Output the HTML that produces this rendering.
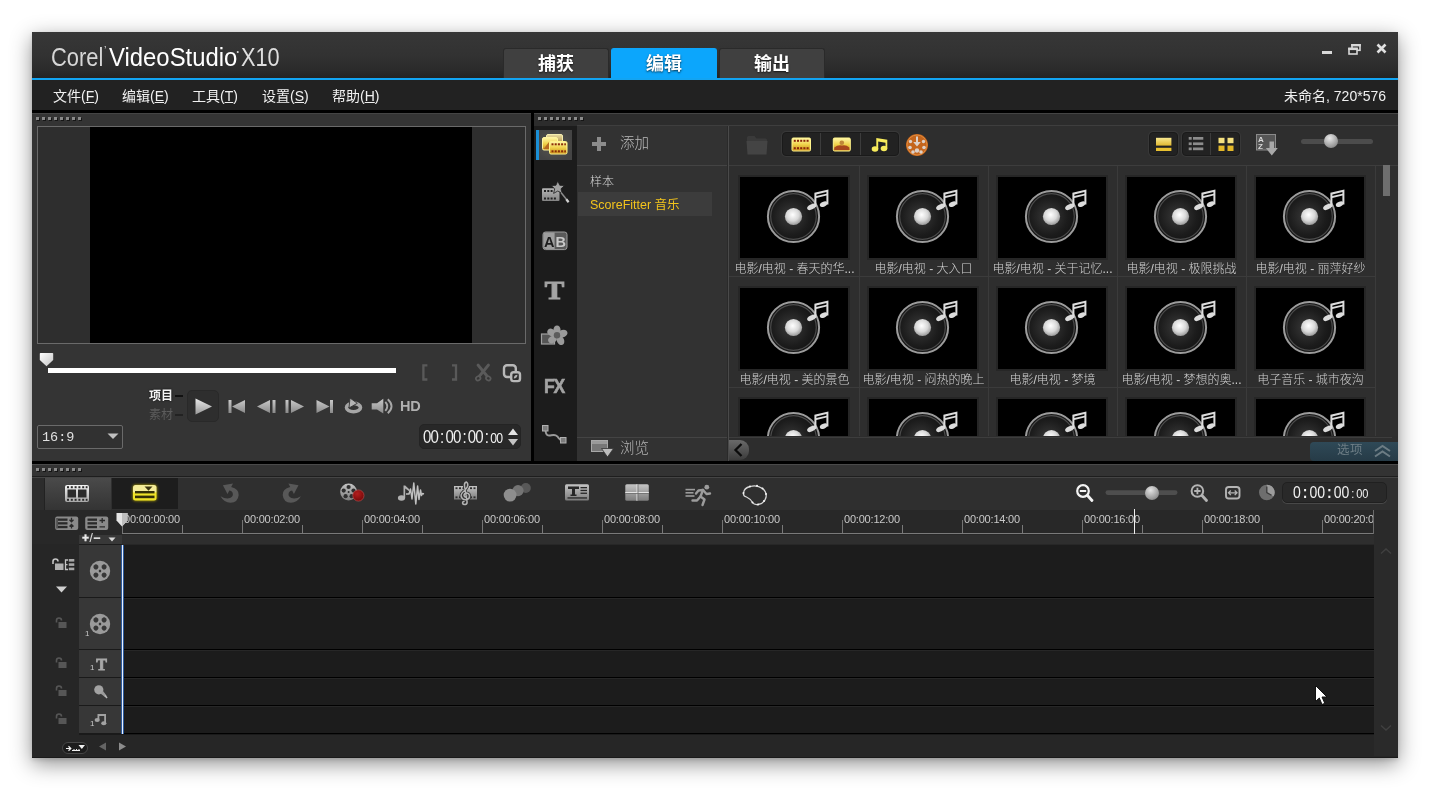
<!DOCTYPE html>
<html lang="zh-CN">
<head>
<meta charset="utf-8">
<title>Corel VideoStudio X10</title>
<style>
html,body{margin:0;padding:0;background:#fff;}
body{width:1430px;height:790px;position:relative;overflow:hidden;will-change:transform;font-family:"Liberation Sans","Noto Sans CJK SC",sans-serif;font-size:12px;color:#ddd;}
.a{position:absolute;box-sizing:border-box;}
#win{left:32px;top:32px;width:1366px;height:725.500px;background:#2b2b2b;box-shadow:0 6px 20px 0 rgba(0,0,0,.43),0 2px 4px rgba(0,0,0,.12);}
#title{left:32px;top:32px;width:1366px;height:46px;background:linear-gradient(#373737,#323232 50%,#2b2b2b 82%,#232323);}
#blue{left:32px;top:78px;width:1366px;height:2.300px;background:#12a4f2;}
#menu{left:32px;top:80px;width:1366px;height:30px;background:#222;}
#blk1{left:32px;top:110px;width:1366px;height:3px;background:#000;}
.tab{top:48px;width:106px;height:30px;background:#404040;color:#fff;font-weight:bold;font-size:18px;line-height:30px;text-align:center;text-shadow:0 1px 2px rgba(0,0,0,.7);border-radius:3px 3px 0 0;border:1px solid #2a2a2a;border-bottom:none;}
.tab.on{background:#0ca6fc;border-color:#0ca6fc;}
.lg{top:41px;height:32px;line-height:32px;font-size:25px;white-space:nowrap;transform-origin:0 50%;}
.mi{top:80px;height:30px;line-height:33px;font-size:14px;color:#f0f0f0;white-space:nowrap;}
.mi u{text-decoration:underline;}
.grip{height:4px;width:46px;background:repeating-linear-gradient(90deg,#8a8a8a 0,#8a8a8a 3px,transparent 3px,transparent 6px) 0 0/45px 3px no-repeat,repeating-linear-gradient(90deg,#161616 0,#161616 3px,transparent 3px,transparent 6px) 1px 1px/45px 3px no-repeat;}
/* preview */
#pv{left:32px;top:113px;width:499px;height:348px;background:#343434;border-top:1px solid #444;}
#pvframe{left:37px;top:126px;width:489px;height:218px;background:#2e2e2e;border:1px solid #6a6a6a;}
#pvblack{left:90px;top:127px;width:382px;height:216px;background:#000;}
#vdiv{left:531px;top:113px;width:3px;height:348px;background:#000;}
/* library */
#lib{left:534px;top:113px;width:864px;height:348px;background:#2c2c2c;border-top:1px solid #444;}
#side{left:534px;top:126px;width:43px;height:335px;background:#1c1c1c;}
#nav{left:577px;top:126px;width:151px;height:335px;background:#323232;}
#gal{left:729px;top:126px;width:669px;height:335px;background:#2e2e2e;}
#blk2{left:32px;top:460.500px;width:1366px;height:3.500px;background:#000;}
/* timeline */
#tl{left:32px;top:464px;width:1366px;height:293.500px;background:#262626;border-top:1px solid #4a4a4a;border-bottom:1.500px solid #1a1a1a;}
#tbar{left:32px;top:478px;width:1366px;height:32px;background:#2f2f2f;}
.trk{left:122px;width:1252px;background:#1c1c1c;border-bottom:1px solid #000;border-top:1px solid #272727;}
.th{left:79px;width:43px;background:#373737;border-bottom:1px solid #1a1a1a;}
.cap{width:129px;height:16px;line-height:16px;text-align:center;font-size:12px;font-weight:300;color:#d0d0d0;margin-top:1px;white-space:nowrap;overflow:hidden;}
.thumb{width:108px;height:81px;background:#000;}
.tc{color:#f2f2f2;white-space:nowrap;transform-origin:0 50%;}
.tc .col{display:inline-block;text-align:center;}
.rl{top:513px;font-size:11px;color:#c8c8c8;white-space:nowrap;letter-spacing:-0.2px;}
</style>
</head>
<body>
<div class="a" id="win"></div>
<div class="a" id="title"></div>
<div class="a" id="blue"></div>
<div class="a" id="menu"></div>
<div class="a" id="blk1"></div>

<!-- title -->
<div class="a lg" id="lg1" style="left:51px;transform:scaleX(.875);color:#d6d6d6;">Corel</div>
<div class="a" style="left:104px;top:45px;font-size:11px;line-height:11px;color:#d8d8d8;">&#8217;</div>
<div class="a lg" id="lg2" style="left:109px;transform:scaleX(.955);color:#fff;">VideoStudio</div>
<div class="a" style="left:236.500px;top:48px;font-size:7px;line-height:8px;color:#d8d8d8;">&#8226;</div>
<div class="a lg" id="lg3" style="left:240.500px;transform:scaleX(.87);color:#dedede;">X10</div>
<div class="a tab" style="left:503px;">捕获</div>
<div class="a tab on" style="left:611px;">编辑</div>
<div class="a tab" style="left:719px;">输出</div>
<svg class="a" style="left:1318px;top:41px;" width="72" height="18" viewBox="0 0 72 18">
 <rect x="4" y="10" width="10" height="3" fill="#d8d8d8"/>
 <g fill="none" stroke="#d8d8d8" stroke-width="1.6"><rect x="34" y="3.8" width="8" height="5.5"/><rect x="31" y="7.5" width="8" height="5.5" fill="#2d2d2d"/></g>
 <rect x="33.2" y="3" width="9.6" height="2.4" fill="#d8d8d8"/><rect x="30.2" y="6.7" width="9.6" height="2.4" fill="#d8d8d8"/>
 <path d="M59.5 3.5 L67.5 11.5 M67.5 3.5 L59.5 11.5" stroke="#e0e0e0" stroke-width="2.6"/>
</svg>
<!-- menu -->
<div class="a mi" style="left:53px;">文件(<u>F</u>)</div>
<div class="a mi" style="left:122px;">编辑(<u>E</u>)</div>
<div class="a mi" style="left:192px;">工具(<u>T</u>)</div>
<div class="a mi" style="left:262px;">设置(<u>S</u>)</div>
<div class="a mi" style="left:332px;">帮助(<u>H</u>)</div>
<div class="a mi" style="right:44px;">未命名, 720*576</div>
<div class="a" id="pv"></div>

<!-- preview -->
<div class="a grip" style="left:36px;top:117px;"></div>
<div class="a" id="pvframe"></div>
<div class="a" id="pvblack"></div>
<svg class="a" style="left:39px;top:352px;" width="16" height="16" viewBox="0 0 16 16"><defs><linearGradient id="gth" x1="0" y1="0" x2="1" y2="1"><stop offset="0" stop-color="#fff"/><stop offset="1" stop-color="#c4c4c4"/></linearGradient></defs><path d="M1.5 1 H13.5 Q14.2 1 14.2 1.8 V8 L7.5 14.2 L0.8 8 V1.8 Q0.8 1 1.5 1Z" fill="url(#gth)"/></svg>
<div class="a" style="left:48px;top:368px;width:348px;height:5px;background:#fff;"></div>
<svg class="a" style="left:418px;top:360px;" width="108" height="26" viewBox="0 0 108 26">
 <g fill="none" stroke="#595959" stroke-width="2.300"><path d="M9.400 5.400 H5.400 V19.500 H9.400"/><path d="M34 5.400 H38 V19.500 H34"/></g>
 <g fill="none" stroke="#5a5a5a" stroke-linecap="round"><path d="M60 5 L69 16" stroke-width="2.800"/><path d="M70.500 5 L61.500 16" stroke-width="2.800"/><ellipse cx="60.200" cy="18.300" rx="2.400" ry="2" stroke-width="1.700" transform="rotate(-35 60.200 18.300)"/><ellipse cx="70.300" cy="18.300" rx="2.400" ry="2" stroke-width="1.700" transform="rotate(35 70.300 18.300)"/></g>
 <g fill="none" stroke="#b8b8b8" stroke-width="2.400"><rect x="86" y="5.200" width="11.800" height="11.800" rx="3"/><rect x="93.200" y="12.300" width="8.800" height="8.800" rx="2.400" fill="#2a2a2a"/></g>
 <path d="M95.800 18.600 Q95.800 15 99.500 14.800 Q99.300 18.600 95.800 18.600Z" fill="#b0b0b0"/>
</svg>
<div class="a" style="left:149px;top:389px;font-size:12px;line-height:14px;font-weight:bold;color:#f4f4f4;text-shadow:0 0 2px #000;">项目</div>
<div class="a" style="left:149px;top:408px;font-size:12px;line-height:14px;color:#5c5c5c;">素材</div>
<div class="a" style="left:175px;top:395px;width:8px;height:2px;background:#111;"></div>
<div class="a" style="left:175px;top:414px;width:8px;height:2px;background:#222;"></div>
<div class="a" style="left:187px;top:390px;width:32px;height:32px;border-radius:5px;background:#2e2e2e;border:1px solid #292929;"></div>
<svg class="a" style="left:187px;top:390px;" width="240" height="32" viewBox="0 0 240 32">
 <defs><linearGradient id="gp" x1="0" y1="0" x2="0" y2="1"><stop offset="0" stop-color="#e8e8e8"/><stop offset="1" stop-color="#9a9a9a"/></linearGradient>
 <linearGradient id="gq" x1="0" y1="0" x2="0" y2="1"><stop offset="0" stop-color="#c8c8c8"/><stop offset="1" stop-color="#8a8a8a"/></linearGradient></defs>
 <path d="M8.5 8.5 L25 16.5 L8.5 24.5Z" fill="url(#gp)"/>
 <g fill="url(#gq)">
  <rect x="41.500" y="10" width="3" height="13"/><path d="M58 10 V23 L45 16.5Z"/>
  <path d="M83 10 V23 L70 16.5Z"/><rect x="85.500" y="10" width="3" height="13"/>
  <rect x="98.500" y="10" width="3" height="13"/><path d="M104 10 V23 L117 16.5Z"/>
  <path d="M129.500 10 V23 L142.500 16.500Z"/><rect x="143" y="10" width="3" height="13"/>
  <path d="M184.700 13.300 H190 L196.300 8.800 V23.400 L190 19.600 H184.700Z"/>
 </g>
 <ellipse cx="166.500" cy="17.600" rx="7" ry="4.200" fill="none" stroke="#a6a6a6" stroke-width="3.600"/>
 <path d="M163 8 L170.300 13.300 L165.500 16 L162 18Z" fill="#b4b4b4" stroke="#343434" stroke-width=".9"/>
 <g fill="none" stroke="#a8a8a8" stroke-width="1.900"><path d="M198.300 11.800 Q202.300 16.300 198.300 20.800"/><path d="M200.800 9.300 Q208.300 16.300 200.800 23.300"/></g>
</svg>
<div class="a" style="left:400px;top:398px;font-size:14.500px;line-height:17px;font-weight:bold;color:#b0b0b0;letter-spacing:-.3px;">HD</div>
<div class="a" style="left:37px;top:424.500px;width:86px;height:24px;border:1px solid #6a6a6a;border-radius:2px;background:#313131;"></div>
<div class="a" style="left:42px;top:429px;font-family:'Liberation Mono',monospace;font-size:13.500px;line-height:17px;color:#e0e0e0;">16:9</div>
<svg class="a" style="left:106px;top:432px;" width="14" height="8" viewBox="0 0 14 8"><path d="M1.500 1.500 H12.500 L7 7Z" fill="#c0c0c0"/></svg>
<div class="a" style="left:419px;top:424px;width:102px;height:25px;border-radius:5px;background:#282828;border:1px solid #242424;"></div>
<div class="a tc" id="tc1" style="left:422.500px;top:426.500px;font-size:19px;line-height:20px;letter-spacing:-1px;transform:scaleX(.79);">00<span class="col" style="width:9.200px">:</span>00<span class="col" style="width:9.200px">:</span>00<span class="col" style="width:9.200px">:</span><span style="font-size:15.500px">00</span></div>
<svg class="a" style="left:506px;top:427px;" width="14" height="20" viewBox="0 0 14 20"><path d="M7 1.500 L12 8 H2Z" fill="#e4e4e4"/><path d="M7 18.500 L12 12 H2Z" fill="#c4c4c4"/></svg>
<div class="a" id="vdiv"></div>
<div class="a" id="lib"></div>

<!-- library -->
<div class="a grip" style="left:538px;top:117px;"></div>
<div class="a" id="side"></div>
<div class="a" id="nav"></div>
<div class="a" id="gal"></div>
<div class="a" style="left:577px;top:125px;width:821px;height:1px;background:#3e3e3e;"></div>
<div class="a" style="left:727px;top:126px;width:1px;height:335px;background:#2a2a2a;"></div><div class="a" style="left:728px;top:126px;width:1px;height:335px;background:#4a4a4a;"></div>
<!-- sidebar icons -->
<div class="a" style="left:536px;top:130px;width:36px;height:30px;background:radial-gradient(ellipse at 50% 50%,#5a5852,#444 75%);"></div>
<div class="a" style="left:536px;top:130px;width:3px;height:30px;background:#1b8fd6;"></div>
<svg class="a" style="left:540px;top:130px;" width="32" height="30" viewBox="0 0 32 30">
 <defs>
  <linearGradient id="gy" x1="0" y1="0" x2="0" y2="1"><stop offset="0" stop-color="#fff6a8"/><stop offset=".5" stop-color="#f0d24a"/><stop offset="1" stop-color="#c88a18"/></linearGradient>
  <linearGradient id="gy2" x1="0" y1="0" x2="0" y2="1"><stop offset="0" stop-color="#e8dca0"/><stop offset="1" stop-color="#a07830"/></linearGradient>
 </defs>
 <rect x="6.500" y="4.500" width="16" height="12" rx="1.500" fill="url(#gy2)" stroke="#f4ecb0" stroke-width="1"/>
 <rect x="2.500" y="7.500" width="15" height="12.500" rx="1.500" fill="url(#gy)" stroke="#fff4a0" stroke-width="1"/>
 <path d="M3.500 19 L9 12 L12 15 L14 13 L17 16 V19.500Z" fill="#b86a20"/>
 <rect x="9.500" y="11.500" width="17.500" height="12.500" rx="1.500" fill="url(#gy)" stroke="#fff48c" stroke-width="1"/>
 <g fill="#8a2c08"><rect x="11.500" y="13.300" width="2" height="2"/><rect x="14.700" y="13.300" width="2" height="2"/><rect x="17.900" y="13.300" width="2" height="2"/><rect x="21.100" y="13.300" width="2" height="2"/><rect x="24.300" y="13.300" width="1.600" height="2"/>
 <rect x="11.500" y="20.300" width="2" height="2"/><rect x="14.700" y="20.300" width="2" height="2"/><rect x="17.900" y="20.300" width="2" height="2"/><rect x="21.100" y="20.300" width="2" height="2"/><rect x="24.300" y="20.300" width="1.600" height="2"/></g>
</svg>
<svg class="a" style="left:538px;top:178px;" width="36" height="28" viewBox="0 0 36 28">
 <defs><linearGradient id="gg" x1="0" y1="0" x2="0" y2="1"><stop offset="0" stop-color="#b4b4b4"/><stop offset="1" stop-color="#858585"/></linearGradient></defs>
 <rect x="4" y="10.300" width="17.500" height="12.700" rx="1" fill="url(#gg)"/>
 <g fill="#222"><rect x="6" y="12" width="2" height="2"/><rect x="9.300" y="12" width="2" height="2"/><rect x="12.600" y="12" width="2" height="2"/>
 <rect x="6" y="19.500" width="2" height="2"/><rect x="9.300" y="19.500" width="2" height="2"/><rect x="12.600" y="19.500" width="2" height="2"/><rect x="15.900" y="19.500" width="2" height="2"/></g>
 <path d="M19.800 3 L21.800 7.300 L26.500 7.600 L23 10.800 L24.200 15.400 L19.800 13 L15.600 15.400 L16.700 10.800 L13.200 7.600 L17.900 7.300Z" fill="#a2a2a2" stroke="#1c1c1c" stroke-width=".8"/>
 <path d="M23 14.500 L30.300 23.800" stroke="#8a8a8a" stroke-width="1.500"/><path d="M28.300 21.300 L30.600 24.200" stroke="#d0d0d0" stroke-width="2.200"/>
</svg>
<svg class="a" style="left:540px;top:229px;" width="32" height="24" viewBox="0 0 32 24">
 <rect x="3" y="3" width="24" height="17.600" rx="2.500" fill="#5a5a5a" stroke="#9c9c9c" stroke-width="1"/>
 <path d="M5.500 3.500 H14.600 V20.100 H5.500 Q3.500 20.100 3.500 18.100 V5.500 Q3.500 3.500 5.500 3.500Z" fill="#9e9e9e"/>
 <text x="9.300" y="17.600" font-family="Liberation Sans,sans-serif" font-size="14.500" font-weight="bold" fill="#1e1e1e" text-anchor="middle">A</text>
 <text x="20.800" y="17.600" font-family="Liberation Sans,sans-serif" font-size="14.500" font-weight="bold" fill="#c8c8c8" text-anchor="middle">B</text>
</svg>
<div class="a" style="left:540px;top:276px;width:29px;height:30px;line-height:30px;text-align:center;transform:scaleX(1.120);font-family:'Liberation Serif',serif;font-weight:bold;font-size:26px;color:#a4a4a4;-webkit-text-stroke:1.100px #a4a4a4;">T</div>
<svg class="a" style="left:538px;top:322px;" width="34" height="28" viewBox="0 0 34 28">
 <rect x="3.500" y="12" width="13" height="10" fill="#555" stroke="#a0a0a0" stroke-width="1.200"/>
 <g fill="#9a9a9a"><ellipse cx="19" cy="8" rx="3.600" ry="4.600"/><ellipse cx="25" cy="11.500" rx="4.600" ry="3.600" transform="rotate(-20 25 11.500)"/><ellipse cx="22.500" cy="18.500" rx="3.600" ry="4.800" transform="rotate(-25 22.500 18.500)"/><ellipse cx="14.500" cy="17.500" rx="4.600" ry="3.400" transform="rotate(-30 14.500 17.500)"/><ellipse cx="13.500" cy="10.500" rx="4.400" ry="3.400" transform="rotate(30 13.500 10.500)"/></g>
 <circle cx="19" cy="13.300" r="3.200" fill="#5c5c5c"/>
</svg>
<div class="a" style="left:539.500px;top:374px;width:28px;height:24px;line-height:24px;text-align:center;font-weight:bold;font-size:20px;letter-spacing:-1.500px;color:#a2a2a2;-webkit-text-stroke:.6px #a2a2a2;transform:scaleX(.88);">FX</div>
<svg class="a" style="left:538px;top:422px;" width="34" height="26" viewBox="0 0 34 26">
 <path d="M7.500 7 C7.500 18 14 11 18 13.500 C22 16 20 18 24.500 18" fill="none" stroke="#9a9a9a" stroke-width="2"/>
 <rect x="4.500" y="3.500" width="5.500" height="5.500" fill="#7c7c7c" stroke="#b0b0b0" stroke-width="1"/>
 <rect x="22.500" y="15.500" width="5.500" height="5.500" fill="#7c7c7c" stroke="#b0b0b0" stroke-width="1"/>
</svg>
<!-- nav -->
<svg class="a" style="left:591px;top:136px;" width="16" height="16" viewBox="0 0 16 16"><path d="M6 1 H10 V6 H15 V10 H10 V15 H6 V10 H1 V6 H6Z" fill="#8c8c8c"/></svg>
<div class="a" style="left:620px;top:133px;font-size:14.500px;line-height:20px;font-weight:300;color:#bcbcbc;">添加</div>
<div class="a" style="left:577px;top:165px;width:150px;height:1px;background:#444;"></div>
<div class="a" style="left:590px;top:174px;font-size:12px;line-height:16px;font-weight:300;color:#d4d4d4;">样本</div>
<div class="a" style="left:578px;top:192px;width:134px;height:24px;background:#3c3c3c;"></div>
<div class="a" style="left:590px;top:197px;font-size:12.500px;line-height:16px;color:#f3c41c;white-space:nowrap;">ScoreFitter 音乐</div>
<div class="a" style="left:577px;top:437px;width:150px;height:1px;background:#444;"></div>
<svg class="a" style="left:590px;top:439px;" width="26" height="20" viewBox="0 0 26 20"><rect x="1.500" y="1.500" width="16" height="11" fill="#777" stroke="#a8a8a8" stroke-width="1"/><rect x="2" y="2" width="15" height="3" fill="#9a9a9a"/><path d="M11.500 9.500 H23.500 L17.500 18Z" fill="#bdbdbd" stroke="#333" stroke-width=".8"/></svg>
<div class="a" style="left:620px;top:438px;font-size:14.500px;line-height:20px;font-weight:300;color:#b4b4b4;">浏览</div>

<!-- gallery toolbar -->
<svg class="a" style="left:744px;top:132px;" width="26" height="26" viewBox="0 0 26 26"><path d="M3 5.500 Q3 4 4.500 4 H10.500 L12.500 6.500 H21.500 Q23 6.500 23 8 V9.500 H3Z" fill="#3a3a3a"/><path d="M2.500 9 H23.500 L22.500 22.500 H3.500Z" fill="#444"/></svg>
<div class="a" style="left:782px;top:132px;width:117px;height:24px;border-radius:4px;background:#222;border:1px solid #1a1a1a;box-shadow:0 0 0 1px #383838;"></div>
<div class="a" style="left:820px;top:133px;width:1px;height:22px;background:#3c3c3c;"></div>
<div class="a" style="left:860px;top:133px;width:1px;height:22px;background:#3c3c3c;"></div>
<svg class="a" style="left:790px;top:136px;" width="100" height="18" viewBox="0 0 100 18">
 <rect x="2" y="2" width="18.500" height="13" rx="1.200" fill="url(#gy)" stroke="#fff48c" stroke-width="1"/>
 <g fill="#8a2408"><rect x="3.800" y="3.800" width="2" height="2"/><rect x="7" y="3.800" width="2" height="2"/><rect x="10.200" y="3.800" width="2" height="2"/><rect x="13.400" y="3.800" width="2" height="2"/><rect x="16.600" y="3.800" width="2" height="2"/>
 <rect x="3.800" y="11.200" width="2" height="2"/><rect x="7" y="11.200" width="2" height="2"/><rect x="10.200" y="11.200" width="2" height="2"/><rect x="13.400" y="11.200" width="2" height="2"/><rect x="16.600" y="11.200" width="2" height="2"/></g>
 <rect x="43.300" y="2" width="17" height="13" rx="1.200" fill="url(#gy)" stroke="#fff48c" stroke-width="1"/>
 <path d="M44.300 14 V11.500 Q48 8.500 52 9.500 Q56 8.500 59.300 11.500 V14Z" fill="#a8481c"/><circle cx="51.800" cy="6.800" r="2.300" fill="#c08838"/>
 <g fill="#f8ec5c"><ellipse cx="85" cy="13" rx="3.300" ry="2.700"/><ellipse cx="94" cy="12.500" rx="3.300" ry="2.700"/><path d="M86.300 2 L97.300 3.800 V12.500 H95.500 V6.800 L88.200 5.600 V13 H86.300Z"/></g>
</svg>
<svg class="a" style="left:905px;top:133px;" width="24" height="24" viewBox="0 0 24 24"><circle cx="12" cy="12" r="11" fill="#c4651c"/><circle cx="12" cy="12" r="10" fill="none" stroke="#e08a3c" stroke-width="1"/><g fill="#dcd0c8"><circle cx="5.500" cy="8.500" r="1.700"/><circle cx="18.500" cy="8.500" r="1.700"/><circle cx="5" cy="14.500" r="1.800"/><circle cx="19" cy="14.500" r="1.800"/><circle cx="8" cy="19" r="1.800"/><circle cx="16" cy="19" r="1.800"/><circle cx="12" cy="17.500" r="2.200"/><path d="M11 3.500 H13 V9 H15.800 L12 13.500 L8.200 9 H11Z"/></g></svg>
<div class="a" style="left:1149px;top:132px;width:29px;height:24px;border-radius:4px;background:#222;border:1px solid #1a1a1a;box-shadow:0 0 0 1px #383838;"></div>
<div class="a" style="left:1182px;top:132px;width:58px;height:24px;border-radius:4px;background:#222;border:1px solid #1a1a1a;box-shadow:0 0 0 1px #383838;"></div>
<div class="a" style="left:1210px;top:133px;width:1px;height:22px;background:#3c3c3c;"></div>
<svg class="a" style="left:1149px;top:132px;" width="92" height="24" viewBox="0 0 92 24">
 <defs><linearGradient id="gy3" x1="0" y1="0" x2="0" y2="1"><stop offset="0" stop-color="#f8e890"/><stop offset="1" stop-color="#e0b830"/></linearGradient></defs>
 <rect x="7" y="5.800" width="15.400" height="7.800" fill="url(#gy3)"/><rect x="7" y="15.800" width="15.400" height="3.200" fill="#e8c030"/>
 <g fill="#8c8c8c"><rect x="39.700" y="5" width="3" height="2.700"/><rect x="44" y="5" width="10.300" height="2.700"/><rect x="39.700" y="10.400" width="3" height="2.700"/><rect x="44" y="10.400" width="10.300" height="2.700"/><rect x="39.700" y="15.500" width="3" height="2.700"/><rect x="44" y="15.500" width="10.300" height="2.700"/></g>
 <g><rect x="69.500" y="5.800" width="6" height="5.400" fill="#f4e080"/><rect x="78.500" y="5.800" width="6" height="5.400" fill="#f4e080"/><rect x="69.500" y="13.600" width="6" height="5.400" fill="#e4b828"/><rect x="78.500" y="13.600" width="6" height="5.400" fill="#e4b828"/></g>
</svg>
<svg class="a" style="left:1255px;top:132px;" width="26" height="26" viewBox="0 0 26 26"><rect x="1.500" y="2.500" width="19" height="15.500" fill="#555" stroke="#8a8a8a" stroke-width="1"/><path d="M14.500 9.500 H19 V16 H22.800 L16.800 23.500 L10.800 16 H14.500Z" fill="#a8a8a8"/><text x="3" y="9.800" font-family="Liberation Sans,sans-serif" font-weight="bold" font-size="8" fill="#d8d8d8">A</text><text x="3" y="16.800" font-family="Liberation Sans,sans-serif" font-weight="bold" font-size="8" fill="#d8d8d8">Z</text></svg>
<div class="a" style="left:1301px;top:139px;width:72px;height:5px;border-radius:3px;background:#4c4c4c;"></div>
<div class="a" style="left:1324px;top:134px;width:14px;height:14px;border-radius:7px;background:radial-gradient(circle at 40% 30%,#e8e8e8,#a0a0a0 60%,#6c6c6c);"></div>

<!-- gallery -->
<svg class="a" width="0" height="0" style="left:0;top:0"><defs><radialGradient id="gdisc" cx=".45" cy=".5" r=".6"><stop offset="0" stop-color="#3a3a3a"/><stop offset=".6" stop-color="#1c1c1c"/><stop offset="1" stop-color="#101010"/></radialGradient><radialGradient id="gball" cx=".45" cy=".4" r=".65"><stop offset="0" stop-color="#ffffff"/><stop offset=".55" stop-color="#d8d8d8"/><stop offset="1" stop-color="#8c8c8c"/></radialGradient></defs></svg>
<div class="a" style="left:859px;top:165px;width:1px;height:271px;background:#3b3b3b;"></div>
<div class="a" style="left:988px;top:165px;width:1px;height:271px;background:#3b3b3b;"></div>
<div class="a" style="left:1117px;top:165px;width:1px;height:271px;background:#3b3b3b;"></div>
<div class="a" style="left:1246px;top:165px;width:1px;height:271px;background:#3b3b3b;"></div>
<div class="a" style="left:1375px;top:165px;width:1px;height:271px;background:#3b3b3b;"></div>

<div class="a" style="left:729px;top:276px;width:646px;height:1px;background:#3b3b3b;"></div>
<div class="a" style="left:729px;top:387px;width:646px;height:1px;background:#3b3b3b;"></div>
<div class="a" style="left:729px;top:165px;width:669px;height:1px;background:#3d3d3d;"></div>
<div class="a" style="left:738px;top:175px;width:112px;height:85px;background:#262626;"></div>
<svg class="a" style="left:740px;top:177px;" width="108" height="81" viewBox="0 0 108 81"><rect width="108" height="81" fill="#000"/><circle cx="53.500" cy="39.500" r="25.600" fill="url(#gdisc)" stroke="#9c9c9c" stroke-width="2"/><circle cx="53.500" cy="39.500" r="22.800" fill="none" stroke="#4c4c4c" stroke-width="1.200"/><circle cx="53.500" cy="39.500" r="8.600" fill="url(#gball)"/><g fill="#dcdcdc" stroke="none"><ellipse cx="71.800" cy="29.800" rx="5" ry="2.500" transform="rotate(-26 71.800 29.800)"/><ellipse cx="83.600" cy="27.200" rx="4" ry="2.400" transform="rotate(-24 83.600 27.200)"/><path fill-rule="evenodd" d="M74.400 15.800 L88.400 12.600 V27.500 H86.400 V18.600 L76.400 20.900 V29.500 H74.400Z M76.400 17.400 V19 L86.400 16.700 V15.100Z"/></g></svg>
<div class="a cap" style="left:730px;top:260px;">电影/电视 - 春天的华...</div>
<div class="a" style="left:867px;top:175px;width:112px;height:85px;background:#262626;"></div>
<svg class="a" style="left:869px;top:177px;" width="108" height="81" viewBox="0 0 108 81"><rect width="108" height="81" fill="#000"/><circle cx="53.500" cy="39.500" r="25.600" fill="url(#gdisc)" stroke="#9c9c9c" stroke-width="2"/><circle cx="53.500" cy="39.500" r="22.800" fill="none" stroke="#4c4c4c" stroke-width="1.200"/><circle cx="53.500" cy="39.500" r="8.600" fill="url(#gball)"/><g fill="#dcdcdc" stroke="none"><ellipse cx="71.800" cy="29.800" rx="5" ry="2.500" transform="rotate(-26 71.800 29.800)"/><ellipse cx="83.600" cy="27.200" rx="4" ry="2.400" transform="rotate(-24 83.600 27.200)"/><path fill-rule="evenodd" d="M74.400 15.800 L88.400 12.600 V27.500 H86.400 V18.600 L76.400 20.900 V29.500 H74.400Z M76.400 17.400 V19 L86.400 16.700 V15.100Z"/></g></svg>
<div class="a cap" style="left:859px;top:260px;">电影/电视 - 大入口</div>
<div class="a" style="left:996px;top:175px;width:112px;height:85px;background:#262626;"></div>
<svg class="a" style="left:998px;top:177px;" width="108" height="81" viewBox="0 0 108 81"><rect width="108" height="81" fill="#000"/><circle cx="53.500" cy="39.500" r="25.600" fill="url(#gdisc)" stroke="#9c9c9c" stroke-width="2"/><circle cx="53.500" cy="39.500" r="22.800" fill="none" stroke="#4c4c4c" stroke-width="1.200"/><circle cx="53.500" cy="39.500" r="8.600" fill="url(#gball)"/><g fill="#dcdcdc" stroke="none"><ellipse cx="71.800" cy="29.800" rx="5" ry="2.500" transform="rotate(-26 71.800 29.800)"/><ellipse cx="83.600" cy="27.200" rx="4" ry="2.400" transform="rotate(-24 83.600 27.200)"/><path fill-rule="evenodd" d="M74.400 15.800 L88.400 12.600 V27.500 H86.400 V18.600 L76.400 20.900 V29.500 H74.400Z M76.400 17.400 V19 L86.400 16.700 V15.100Z"/></g></svg>
<div class="a cap" style="left:988px;top:260px;">电影/电视 - 关于记忆...</div>
<div class="a" style="left:1125px;top:175px;width:112px;height:85px;background:#262626;"></div>
<svg class="a" style="left:1127px;top:177px;" width="108" height="81" viewBox="0 0 108 81"><rect width="108" height="81" fill="#000"/><circle cx="53.500" cy="39.500" r="25.600" fill="url(#gdisc)" stroke="#9c9c9c" stroke-width="2"/><circle cx="53.500" cy="39.500" r="22.800" fill="none" stroke="#4c4c4c" stroke-width="1.200"/><circle cx="53.500" cy="39.500" r="8.600" fill="url(#gball)"/><g fill="#dcdcdc" stroke="none"><ellipse cx="71.800" cy="29.800" rx="5" ry="2.500" transform="rotate(-26 71.800 29.800)"/><ellipse cx="83.600" cy="27.200" rx="4" ry="2.400" transform="rotate(-24 83.600 27.200)"/><path fill-rule="evenodd" d="M74.400 15.800 L88.400 12.600 V27.500 H86.400 V18.600 L76.400 20.900 V29.500 H74.400Z M76.400 17.400 V19 L86.400 16.700 V15.100Z"/></g></svg>
<div class="a cap" style="left:1117px;top:260px;">电影/电视 - 极限挑战</div>
<div class="a" style="left:1254px;top:175px;width:112px;height:85px;background:#262626;"></div>
<svg class="a" style="left:1256px;top:177px;" width="108" height="81" viewBox="0 0 108 81"><rect width="108" height="81" fill="#000"/><circle cx="53.500" cy="39.500" r="25.600" fill="url(#gdisc)" stroke="#9c9c9c" stroke-width="2"/><circle cx="53.500" cy="39.500" r="22.800" fill="none" stroke="#4c4c4c" stroke-width="1.200"/><circle cx="53.500" cy="39.500" r="8.600" fill="url(#gball)"/><g fill="#dcdcdc" stroke="none"><ellipse cx="71.800" cy="29.800" rx="5" ry="2.500" transform="rotate(-26 71.800 29.800)"/><ellipse cx="83.600" cy="27.200" rx="4" ry="2.400" transform="rotate(-24 83.600 27.200)"/><path fill-rule="evenodd" d="M74.400 15.800 L88.400 12.600 V27.500 H86.400 V18.600 L76.400 20.900 V29.500 H74.400Z M76.400 17.400 V19 L86.400 16.700 V15.100Z"/></g></svg>
<div class="a cap" style="left:1246px;top:260px;">电影/电视 - 丽萍好纱</div>
<div class="a" style="left:738px;top:286px;width:112px;height:85px;background:#262626;"></div>
<svg class="a" style="left:740px;top:288px;" width="108" height="81" viewBox="0 0 108 81"><rect width="108" height="81" fill="#000"/><circle cx="53.500" cy="39.500" r="25.600" fill="url(#gdisc)" stroke="#9c9c9c" stroke-width="2"/><circle cx="53.500" cy="39.500" r="22.800" fill="none" stroke="#4c4c4c" stroke-width="1.200"/><circle cx="53.500" cy="39.500" r="8.600" fill="url(#gball)"/><g fill="#dcdcdc" stroke="none"><ellipse cx="71.800" cy="29.800" rx="5" ry="2.500" transform="rotate(-26 71.800 29.800)"/><ellipse cx="83.600" cy="27.200" rx="4" ry="2.400" transform="rotate(-24 83.600 27.200)"/><path fill-rule="evenodd" d="M74.400 15.800 L88.400 12.600 V27.500 H86.400 V18.600 L76.400 20.900 V29.500 H74.400Z M76.400 17.400 V19 L86.400 16.700 V15.100Z"/></g></svg>
<div class="a cap" style="left:730px;top:371px;">电影/电视 - 美的景色</div>
<div class="a" style="left:867px;top:286px;width:112px;height:85px;background:#262626;"></div>
<svg class="a" style="left:869px;top:288px;" width="108" height="81" viewBox="0 0 108 81"><rect width="108" height="81" fill="#000"/><circle cx="53.500" cy="39.500" r="25.600" fill="url(#gdisc)" stroke="#9c9c9c" stroke-width="2"/><circle cx="53.500" cy="39.500" r="22.800" fill="none" stroke="#4c4c4c" stroke-width="1.200"/><circle cx="53.500" cy="39.500" r="8.600" fill="url(#gball)"/><g fill="#dcdcdc" stroke="none"><ellipse cx="71.800" cy="29.800" rx="5" ry="2.500" transform="rotate(-26 71.800 29.800)"/><ellipse cx="83.600" cy="27.200" rx="4" ry="2.400" transform="rotate(-24 83.600 27.200)"/><path fill-rule="evenodd" d="M74.400 15.800 L88.400 12.600 V27.500 H86.400 V18.600 L76.400 20.900 V29.500 H74.400Z M76.400 17.400 V19 L86.400 16.700 V15.100Z"/></g></svg>
<div class="a cap" style="left:859px;top:371px;">电影/电视 - 闷热的晚上</div>
<div class="a" style="left:996px;top:286px;width:112px;height:85px;background:#262626;"></div>
<svg class="a" style="left:998px;top:288px;" width="108" height="81" viewBox="0 0 108 81"><rect width="108" height="81" fill="#000"/><circle cx="53.500" cy="39.500" r="25.600" fill="url(#gdisc)" stroke="#9c9c9c" stroke-width="2"/><circle cx="53.500" cy="39.500" r="22.800" fill="none" stroke="#4c4c4c" stroke-width="1.200"/><circle cx="53.500" cy="39.500" r="8.600" fill="url(#gball)"/><g fill="#dcdcdc" stroke="none"><ellipse cx="71.800" cy="29.800" rx="5" ry="2.500" transform="rotate(-26 71.800 29.800)"/><ellipse cx="83.600" cy="27.200" rx="4" ry="2.400" transform="rotate(-24 83.600 27.200)"/><path fill-rule="evenodd" d="M74.400 15.800 L88.400 12.600 V27.500 H86.400 V18.600 L76.400 20.900 V29.500 H74.400Z M76.400 17.400 V19 L86.400 16.700 V15.100Z"/></g></svg>
<div class="a cap" style="left:988px;top:371px;">电影/电视 - 梦境</div>
<div class="a" style="left:1125px;top:286px;width:112px;height:85px;background:#262626;"></div>
<svg class="a" style="left:1127px;top:288px;" width="108" height="81" viewBox="0 0 108 81"><rect width="108" height="81" fill="#000"/><circle cx="53.500" cy="39.500" r="25.600" fill="url(#gdisc)" stroke="#9c9c9c" stroke-width="2"/><circle cx="53.500" cy="39.500" r="22.800" fill="none" stroke="#4c4c4c" stroke-width="1.200"/><circle cx="53.500" cy="39.500" r="8.600" fill="url(#gball)"/><g fill="#dcdcdc" stroke="none"><ellipse cx="71.800" cy="29.800" rx="5" ry="2.500" transform="rotate(-26 71.800 29.800)"/><ellipse cx="83.600" cy="27.200" rx="4" ry="2.400" transform="rotate(-24 83.600 27.200)"/><path fill-rule="evenodd" d="M74.400 15.800 L88.400 12.600 V27.500 H86.400 V18.600 L76.400 20.900 V29.500 H74.400Z M76.400 17.400 V19 L86.400 16.700 V15.100Z"/></g></svg>
<div class="a cap" style="left:1117px;top:371px;">电影/电视 - 梦想的奥...</div>
<div class="a" style="left:1254px;top:286px;width:112px;height:85px;background:#262626;"></div>
<svg class="a" style="left:1256px;top:288px;" width="108" height="81" viewBox="0 0 108 81"><rect width="108" height="81" fill="#000"/><circle cx="53.500" cy="39.500" r="25.600" fill="url(#gdisc)" stroke="#9c9c9c" stroke-width="2"/><circle cx="53.500" cy="39.500" r="22.800" fill="none" stroke="#4c4c4c" stroke-width="1.200"/><circle cx="53.500" cy="39.500" r="8.600" fill="url(#gball)"/><g fill="#dcdcdc" stroke="none"><ellipse cx="71.800" cy="29.800" rx="5" ry="2.500" transform="rotate(-26 71.800 29.800)"/><ellipse cx="83.600" cy="27.200" rx="4" ry="2.400" transform="rotate(-24 83.600 27.200)"/><path fill-rule="evenodd" d="M74.400 15.800 L88.400 12.600 V27.500 H86.400 V18.600 L76.400 20.900 V29.500 H74.400Z M76.400 17.400 V19 L86.400 16.700 V15.100Z"/></g></svg>
<div class="a cap" style="left:1246px;top:371px;">电子音乐 - 城市夜沟</div>
<div class="a" style="left:738px;top:397px;width:112px;height:39px;background:#262626;"></div>
<svg class="a" style="left:740px;top:399px;" width="108" height="37" viewBox="0 0 108 37"><rect width="108" height="37" fill="#000"/><circle cx="53.500" cy="39.500" r="25.600" fill="url(#gdisc)" stroke="#9c9c9c" stroke-width="2"/><circle cx="53.500" cy="39.500" r="22.800" fill="none" stroke="#4c4c4c" stroke-width="1.200"/><circle cx="53.500" cy="39.500" r="8.600" fill="url(#gball)"/><g fill="#dcdcdc" stroke="none"><ellipse cx="71.800" cy="29.800" rx="5" ry="2.500" transform="rotate(-26 71.800 29.800)"/><ellipse cx="83.600" cy="27.200" rx="4" ry="2.400" transform="rotate(-24 83.600 27.200)"/><path fill-rule="evenodd" d="M74.400 15.800 L88.400 12.600 V27.500 H86.400 V18.600 L76.400 20.900 V29.500 H74.400Z M76.400 17.400 V19 L86.400 16.700 V15.100Z"/></g></svg>
<div class="a" style="left:867px;top:397px;width:112px;height:39px;background:#262626;"></div>
<svg class="a" style="left:869px;top:399px;" width="108" height="37" viewBox="0 0 108 37"><rect width="108" height="37" fill="#000"/><circle cx="53.500" cy="39.500" r="25.600" fill="url(#gdisc)" stroke="#9c9c9c" stroke-width="2"/><circle cx="53.500" cy="39.500" r="22.800" fill="none" stroke="#4c4c4c" stroke-width="1.200"/><circle cx="53.500" cy="39.500" r="8.600" fill="url(#gball)"/><g fill="#dcdcdc" stroke="none"><ellipse cx="71.800" cy="29.800" rx="5" ry="2.500" transform="rotate(-26 71.800 29.800)"/><ellipse cx="83.600" cy="27.200" rx="4" ry="2.400" transform="rotate(-24 83.600 27.200)"/><path fill-rule="evenodd" d="M74.400 15.800 L88.400 12.600 V27.500 H86.400 V18.600 L76.400 20.900 V29.500 H74.400Z M76.400 17.400 V19 L86.400 16.700 V15.100Z"/></g></svg>
<div class="a" style="left:996px;top:397px;width:112px;height:39px;background:#262626;"></div>
<svg class="a" style="left:998px;top:399px;" width="108" height="37" viewBox="0 0 108 37"><rect width="108" height="37" fill="#000"/><circle cx="53.500" cy="39.500" r="25.600" fill="url(#gdisc)" stroke="#9c9c9c" stroke-width="2"/><circle cx="53.500" cy="39.500" r="22.800" fill="none" stroke="#4c4c4c" stroke-width="1.200"/><circle cx="53.500" cy="39.500" r="8.600" fill="url(#gball)"/><g fill="#dcdcdc" stroke="none"><ellipse cx="71.800" cy="29.800" rx="5" ry="2.500" transform="rotate(-26 71.800 29.800)"/><ellipse cx="83.600" cy="27.200" rx="4" ry="2.400" transform="rotate(-24 83.600 27.200)"/><path fill-rule="evenodd" d="M74.400 15.800 L88.400 12.600 V27.500 H86.400 V18.600 L76.400 20.900 V29.500 H74.400Z M76.400 17.400 V19 L86.400 16.700 V15.100Z"/></g></svg>
<div class="a" style="left:1125px;top:397px;width:112px;height:39px;background:#262626;"></div>
<svg class="a" style="left:1127px;top:399px;" width="108" height="37" viewBox="0 0 108 37"><rect width="108" height="37" fill="#000"/><circle cx="53.500" cy="39.500" r="25.600" fill="url(#gdisc)" stroke="#9c9c9c" stroke-width="2"/><circle cx="53.500" cy="39.500" r="22.800" fill="none" stroke="#4c4c4c" stroke-width="1.200"/><circle cx="53.500" cy="39.500" r="8.600" fill="url(#gball)"/><g fill="#dcdcdc" stroke="none"><ellipse cx="71.800" cy="29.800" rx="5" ry="2.500" transform="rotate(-26 71.800 29.800)"/><ellipse cx="83.600" cy="27.200" rx="4" ry="2.400" transform="rotate(-24 83.600 27.200)"/><path fill-rule="evenodd" d="M74.400 15.800 L88.400 12.600 V27.500 H86.400 V18.600 L76.400 20.900 V29.500 H74.400Z M76.400 17.400 V19 L86.400 16.700 V15.100Z"/></g></svg>
<div class="a" style="left:1254px;top:397px;width:112px;height:39px;background:#262626;"></div>
<svg class="a" style="left:1256px;top:399px;" width="108" height="37" viewBox="0 0 108 37"><rect width="108" height="37" fill="#000"/><circle cx="53.500" cy="39.500" r="25.600" fill="url(#gdisc)" stroke="#9c9c9c" stroke-width="2"/><circle cx="53.500" cy="39.500" r="22.800" fill="none" stroke="#4c4c4c" stroke-width="1.200"/><circle cx="53.500" cy="39.500" r="8.600" fill="url(#gball)"/><g fill="#dcdcdc" stroke="none"><ellipse cx="71.800" cy="29.800" rx="5" ry="2.500" transform="rotate(-26 71.800 29.800)"/><ellipse cx="83.600" cy="27.200" rx="4" ry="2.400" transform="rotate(-24 83.600 27.200)"/><path fill-rule="evenodd" d="M74.400 15.800 L88.400 12.600 V27.500 H86.400 V18.600 L76.400 20.900 V29.500 H74.400Z M76.400 17.400 V19 L86.400 16.700 V15.100Z"/></g></svg>
<div class="a" style="left:1383px;top:165px;width:7px;height:31px;background:#6e6e6e;"></div>
<div class="a" style="left:729px;top:436px;width:669px;height:25px;background:#2d2d2d;"></div><div class="a" style="left:729px;top:436.500px;width:663px;height:1px;background:#3d3d3d;"></div>
<div class="a" style="left:729px;top:440px;width:20px;height:20px;border-radius:0 9px 9px 0;background:linear-gradient(#6a6a6a,#3c3c3c);"></div>
<svg class="a" style="left:729px;top:440px;" width="20" height="20" viewBox="0 0 20 20"><path d="M12.500 4 L6.500 10 L12.500 16" fill="none" stroke="#0c0c0c" stroke-width="2.300"/></svg>
<div class="a" style="left:1309.500px;top:442px;width:88.500px;height:18.500px;background:linear-gradient(#2f4957,#263b47);border-radius:4px 0 0 4px;"></div>
<div class="a" style="left:1337px;top:441px;font-size:12.500px;line-height:18px;letter-spacing:.5px;color:#6c7c84;">选项</div>
<svg class="a" style="left:1372px;top:443px;" width="20" height="16" viewBox="0 0 20 16"><g fill="none" stroke="#6c7c84" stroke-width="2"><path d="M3 8 L10.500 3 L18 8"/><path d="M3 13.500 L10.500 8.500 L18 13.500"/></g></svg>
<div class="a" id="blk2"></div>
<div class="a" id="tl"></div>

<!-- timeline -->
<div class="a" style="left:32px;top:465px;width:1366px;height:11px;background:#333;"></div>
<div class="a" style="left:32px;top:476px;width:1366px;height:1px;background:#1e1e1e;"></div>
<div class="a" style="left:32px;top:477px;width:1366px;height:1px;background:#454545;"></div>
<div class="a grip" style="left:36px;top:468px;"></div>
<div class="a" id="tbar"></div>
<div class="a" style="left:32px;top:478px;width:12px;height:32px;background:#2c2c2c;"></div>
<div class="a" style="left:44px;top:478px;width:67px;height:32px;background:linear-gradient(#4a4a4a,#343434);border-left:1px solid #222;"></div>
<div class="a" style="left:112px;top:478px;width:66px;height:31px;background:#1d1d1d;"></div>
<div class="a" style="left:32px;top:510px;width:1366px;height:34px;background:#282828;"></div>
<div class="a" style="left:122px;top:533px;width:1252px;height:1px;background:#7a7a7a;"></div>
<div class="a" style="left:79px;top:535px;width:43px;height:9px;background:#383838;"></div>
<div class="a" style="left:122px;top:535px;width:1252px;height:9px;background:#2e2e2e;"></div>
<div class="a" style="left:1374px;top:510px;width:24px;height:246px;background:#2a2a2a;"></div>
<div class="a" style="left:122px;top:520px;width:1px;height:13px;background:#747474;"></div>
<div class="a rl" style="left:124px;width:60px;overflow:hidden;">00:00:00:00</div>
<div class="a" style="left:182px;top:525px;width:1px;height:8px;background:#7a7a7a;"></div>
<div class="a" style="left:242px;top:520px;width:1px;height:13px;background:#747474;"></div>
<div class="a rl" style="left:244px;width:60px;overflow:hidden;">00:00:02:00</div>
<div class="a" style="left:302px;top:525px;width:1px;height:8px;background:#7a7a7a;"></div>
<div class="a" style="left:362px;top:520px;width:1px;height:13px;background:#747474;"></div>
<div class="a rl" style="left:364px;width:60px;overflow:hidden;">00:00:04:00</div>
<div class="a" style="left:422px;top:525px;width:1px;height:8px;background:#7a7a7a;"></div>
<div class="a" style="left:482px;top:520px;width:1px;height:13px;background:#747474;"></div>
<div class="a rl" style="left:484px;width:60px;overflow:hidden;">00:00:06:00</div>
<div class="a" style="left:542px;top:525px;width:1px;height:8px;background:#7a7a7a;"></div>
<div class="a" style="left:602px;top:520px;width:1px;height:13px;background:#747474;"></div>
<div class="a rl" style="left:604px;width:60px;overflow:hidden;">00:00:08:00</div>
<div class="a" style="left:662px;top:525px;width:1px;height:8px;background:#7a7a7a;"></div>
<div class="a" style="left:722px;top:520px;width:1px;height:13px;background:#747474;"></div>
<div class="a rl" style="left:724px;width:60px;overflow:hidden;">00:00:10:00</div>
<div class="a" style="left:782px;top:525px;width:1px;height:8px;background:#7a7a7a;"></div>
<div class="a" style="left:842px;top:520px;width:1px;height:13px;background:#747474;"></div>
<div class="a rl" style="left:844px;width:60px;overflow:hidden;">00:00:12:00</div>
<div class="a" style="left:902px;top:525px;width:1px;height:8px;background:#7a7a7a;"></div>
<div class="a" style="left:962px;top:520px;width:1px;height:13px;background:#747474;"></div>
<div class="a rl" style="left:964px;width:60px;overflow:hidden;">00:00:14:00</div>
<div class="a" style="left:1022px;top:525px;width:1px;height:8px;background:#7a7a7a;"></div>
<div class="a" style="left:1082px;top:520px;width:1px;height:13px;background:#747474;"></div>
<div class="a rl" style="left:1084px;width:60px;overflow:hidden;">00:00:16:00</div>
<div class="a" style="left:1142px;top:525px;width:1px;height:8px;background:#7a7a7a;"></div>
<div class="a" style="left:1202px;top:520px;width:1px;height:13px;background:#747474;"></div>
<div class="a rl" style="left:1204px;width:60px;overflow:hidden;">00:00:18:00</div>
<div class="a" style="left:1262px;top:525px;width:1px;height:8px;background:#7a7a7a;"></div>
<div class="a" style="left:1322px;top:520px;width:1px;height:13px;background:#747474;"></div>
<div class="a rl" style="left:1324px;width:50px;overflow:hidden;">00:00:20:00</div>
<div class="a" style="left:1134px;top:509px;width:1px;height:25px;background:#f0f0f0;"></div>
<div class="a th" style="top:544px;height:54px;"></div>
<div class="a trk" style="top:544px;height:54px;"></div>
<div class="a th" style="top:598px;height:52px;"></div>
<div class="a trk" style="top:598px;height:52px;"></div>
<div class="a th" style="top:650px;height:28px;"></div>
<div class="a trk" style="top:650px;height:28px;"></div>
<div class="a th" style="top:678px;height:28px;"></div>
<div class="a trk" style="top:678px;height:28px;"></div>
<div class="a th" style="top:706px;height:28px;"></div>
<div class="a trk" style="top:706px;height:28px;"></div>
<div class="a" style="left:1373px;top:510px;width:1px;height:24px;background:#6a6a6a;"></div>
<div class="a" style="left:79px;top:544px;width:43px;height:1px;background:#1c1c1c;z-index:2;"></div>
<div class="a" style="left:79px;top:734px;width:1295px;height:1px;background:#1a1a1a;"></div>
<div class="a" style="left:121px;top:545px;width:3px;height:189px;background:#2d5a9c;"></div>
<div class="a" style="left:122px;top:545px;width:1px;height:189px;background:#e8f0ff;"></div>
<svg class="a" style="left:115px;top:512px;" width="14" height="16" viewBox="0 0 14 16"><path d="M1.500 1 H12.500 V8.500 L7 14.500 L1.500 8.500Z" fill="#e4e4e4"/><path d="M7 1 V14.500 L12.500 8.500 V1Z" fill="#bdbdbd"/></svg>
<svg class="a" style="left:54px;top:617px;" width="14" height="12" viewBox="0 0 14 12"><path d="M2.500 5.500 V3.500 Q2.500 1 5 1 Q7.500 1 7.500 3.500" fill="none" stroke="#565656" stroke-width="1.600"/><rect x="4.500" y="5" width="8" height="6" fill="#565656"/></svg>
<svg class="a" style="left:54px;top:657px;" width="14" height="12" viewBox="0 0 14 12"><path d="M2.500 5.500 V3.500 Q2.500 1 5 1 Q7.500 1 7.500 3.500" fill="none" stroke="#565656" stroke-width="1.600"/><rect x="4.500" y="5" width="8" height="6" fill="#565656"/></svg>
<svg class="a" style="left:54px;top:685px;" width="14" height="12" viewBox="0 0 14 12"><path d="M2.500 5.500 V3.500 Q2.500 1 5 1 Q7.500 1 7.500 3.500" fill="none" stroke="#565656" stroke-width="1.600"/><rect x="4.500" y="5" width="8" height="6" fill="#565656"/></svg>
<svg class="a" style="left:54px;top:713px;" width="14" height="12" viewBox="0 0 14 12"><path d="M2.500 5.500 V3.500 Q2.500 1 5 1 Q7.500 1 7.500 3.500" fill="none" stroke="#565656" stroke-width="1.600"/><rect x="4.500" y="5" width="8" height="6" fill="#565656"/></svg>

<!-- timeline toolbar icons -->
<svg class="a" style="left:62px;top:482px;" width="30" height="24" viewBox="0 0 30 24">
 <defs><linearGradient id="gw" x1="0" y1="0" x2="0" y2="1"><stop offset="0" stop-color="#f4f4f4"/><stop offset="1" stop-color="#a8a8a8"/></linearGradient></defs>
 <rect x="3" y="3" width="24" height="17" rx="2" fill="url(#gw)"/>
 <g fill="#2c2c2c"><rect x="5.500" y="7.500" width="8.500" height="8"/><rect x="16" y="7.500" width="8.500" height="8"/>
 <rect x="5" y="4.200" width="2" height="2"/><rect x="8.800" y="4.200" width="2" height="2"/><rect x="12.600" y="4.200" width="2" height="2"/><rect x="16.400" y="4.200" width="2" height="2"/><rect x="20.200" y="4.200" width="2" height="2"/><rect x="23.700" y="4.200" width="1.800" height="2"/>
 <rect x="5" y="16.800" width="2" height="2"/><rect x="8.800" y="16.800" width="2" height="2"/><rect x="12.600" y="16.800" width="2" height="2"/><rect x="16.400" y="16.800" width="2" height="2"/><rect x="20.200" y="16.800" width="2" height="2"/><rect x="23.700" y="16.800" width="1.800" height="2"/></g>
</svg>
<svg class="a" style="left:130px;top:482px;" width="30" height="22" viewBox="0 0 30 22">
 <defs><linearGradient id="gyt" x1="0" y1="0" x2="0" y2="1"><stop offset="0" stop-color="#f4ec98"/><stop offset=".45" stop-color="#f4ec98"/><stop offset=".5" stop-color="#f0e428"/><stop offset="1" stop-color="#f0e428"/></linearGradient></defs>
 <rect x="3" y="3" width="23.500" height="15.500" rx="2.500" fill="url(#gyt)" style="filter:drop-shadow(0 0 1.500px #c8b800)"/>
 <path d="M14.500 4.500 H22.500 L18.500 8.800Z" fill="#3a3410"/>
 <rect x="5" y="9" width="19.500" height="2.400" fill="#343008"/><rect x="5" y="13.600" width="19.500" height="2.600" fill="#343008"/>
</svg>
<svg class="a" style="left:218px;top:481px;" width="90" height="24" viewBox="0 0 90 24">
 <path d="M4.900 4.300 L15 2.600 L13.200 6 Q21 8 20.700 14 Q20 21.500 12.500 21.800 Q6 21.500 2.500 15.200 Q8 18.500 12 17 Q16 15 14.500 11.500 Q13.500 9.500 11.300 9.500 L9.500 13Z" fill="#585858"/>
 <path d="M4.900 4.300 L15 2.600 L13.200 6 Q21 8 20.700 14 Q20 21.500 12.500 21.800 Q6 21.500 2.500 15.200 Q8 18.500 12 17 Q16 15 14.500 11.500 Q13.500 9.500 11.300 9.500 L9.500 13Z" fill="#585858" transform="translate(85.400,0) scale(-1,1)"/>
</svg>
<svg class="a" style="left:338px;top:481px;" width="200" height="26" viewBox="0 0 200 26">
 <defs><linearGradient id="gi" x1="0" y1="0" x2="0" y2="1"><stop offset="0" stop-color="#c4c4c4"/><stop offset="1" stop-color="#7c7c7c"/></linearGradient>
 <radialGradient id="gred" cx=".4" cy=".35" r=".7"><stop offset="0" stop-color="#b41e1e"/><stop offset="1" stop-color="#740808"/></radialGradient></defs>
 <!-- reel -->
 <circle cx="10.600" cy="11" r="8.400" fill="url(#gi)"/>
 <g fill="#2e2e2e"><circle cx="10.600" cy="6" r="2.100"/><circle cx="5.700" cy="9.600" r="2.100"/><circle cx="15.500" cy="9.600" r="2.100"/><circle cx="7.600" cy="15.200" r="2.100"/><circle cx="13.600" cy="15.200" r="2.100"/><circle cx="10.600" cy="11" r="1"/></g>
 <circle cx="20.400" cy="14.500" r="5.600" fill="url(#gred)" stroke="#c45050" stroke-width=".6"/>
 <!-- note + wave -->
 <g fill="#b0b0b0"><ellipse cx="63.500" cy="17" rx="3.600" ry="2.800"/><path d="M65.500 4.500 H67.200 L71.500 8.500 V10.500 L67.200 7.500 V17 H65.500Z"/></g>
 <path d="M68 13 L71 13 L72.500 8 L74 18 L75.800 2 L77.800 23 L79.600 5 L81 18.500 L82.500 9 L83.500 14.500 L84.500 12.500 L86 13" fill="none" stroke="#c0c0c0" stroke-width="1.500" stroke-linejoin="round"/>
 <!-- film + clef -->
 <rect x="116" y="5" width="23" height="13.500" fill="url(#gi)"/>
 <g fill="#2e2e2e"><rect x="117.500" y="6.300" width="2" height="1.800"/><rect x="121" y="6.300" width="2" height="1.800"/><rect x="124.500" y="6.300" width="2" height="1.800"/><rect x="132" y="6.300" width="2" height="1.800"/><rect x="135.500" y="6.300" width="2" height="1.800"/>
 <rect x="117.500" y="15.400" width="2" height="1.800"/><rect x="121" y="15.400" width="2" height="1.800"/><rect x="132" y="15.400" width="2" height="1.800"/><rect x="135.500" y="15.400" width="2" height="1.800"/></g>
 <path d="M127.500 23.500 Q125 24 124.500 22 Q124.500 20.500 126 20.500 M127.500 23.500 Q129.500 23 129 20 L126.500 5 Q126 1.500 128.500 1 Q130.500 2.500 129.500 5.500 Q128.500 8 125.500 10.500 Q122 13.500 123.500 16.500 Q125.500 19.500 129 18.500 Q132 17.500 131.500 14.500 Q131 12 128.500 12 Q126 12.300 126 14.500 Q126.300 16 127.800 16.200" fill="none" stroke="#2e2e2e" stroke-width="3" stroke-linecap="round"/>
 <path d="M127.500 23.500 Q125 24 124.500 22 Q124.500 20.500 126 20.500 M127.500 23.500 Q129.500 23 129 20 L126.500 5 Q126 1.500 128.500 1 Q130.500 2.500 129.500 5.500 Q128.500 8 125.500 10.500 Q122 13.500 123.500 16.500 Q125.500 19.500 129 18.500 Q132 17.500 131.500 14.500 Q131 12 128.500 12 Q126 12.300 126 14.500 Q126.300 16 127.800 16.200" fill="none" stroke="#b4b4b4" stroke-width="1.500" stroke-linecap="round"/>
 <!-- circles -->
 <circle cx="187.800" cy="7" r="5" fill="#585858"/><circle cx="180" cy="9.600" r="5.600" fill="#747474"/><circle cx="172.100" cy="14.100" r="6.400" fill="#8e8e8e"/>
</svg>
<svg class="a" style="left:562px;top:481px;" width="210" height="28" viewBox="0 0 210 28">
 <!-- subtitle -->
 <rect x="3" y="3.200" width="24" height="16.200" rx="1.500" fill="url(#gi)"/>
 <g fill="#262626"><path d="M6 5.500 H17 V8 H13 V13.500 H14.500 V15 H8.500 V13.500 H10 V8 H6Z"/><rect x="18.500" y="6" width="6.500" height="1.300"/><rect x="18.500" y="8.800" width="6.500" height="1.300"/><rect x="18.500" y="11.600" width="6.500" height="1.300"/><rect x="5.500" y="16.300" width="19.500" height="1.300"/></g>
 <!-- grid -->
 <rect x="63.300" y="3.200" width="23.500" height="16.600" rx="1.500" fill="url(#gi)"/>
 <path d="M75 3.200 V19.800 M63.300 11.500 H86.800" stroke="#e4e4e4" stroke-width="1"/>
 <path d="M76 3.200 V19.800 M63.300 12.500 H86.800" stroke="#6c6c6c" stroke-width=".8"/>
 <!-- runner -->
 <g fill="none" stroke="#9c9c9c" stroke-width="2.400" stroke-linecap="round" stroke-linejoin="round"><path d="M141 9 L136.500 9.500 L134 12.500"/><path d="M141 9 L138.500 15.500 L142.500 18.500 L140.500 24"/><path d="M138.500 15.500 L135 19.500 L130.500 19.500"/><path d="M141 9 L144.500 13 L148 12.500"/></g>
 <circle cx="144.800" cy="6.200" r="2.400" fill="#9c9c9c"/>
 <g fill="#9c9c9c"><rect x="123.500" y="7.800" width="9.500" height="1.600"/><rect x="123.500" y="11" width="8" height="1.600"/><rect x="123.500" y="14.200" width="9" height="1.600"/></g>
 <!-- lasso -->
 <path d="M181.500 12 Q182 7 188 5.500 Q195 3.500 200.500 7.500 Q205 11 204 16.500 Q202.500 22.500 196 23.500 Q192 24 190.500 21.500 Q188 17.500 184.500 16 Q181 15 181.500 12Z" fill="none" stroke="#d8d8d8" stroke-width="1.300"/>
 <g fill="#f4f4f4"><circle cx="181.500" cy="12" r="1"/><circle cx="188" cy="5.500" r="1"/><circle cx="195" cy="4.800" r="1"/><circle cx="200.500" cy="7.500" r="1"/><circle cx="204" cy="13" r="1"/><circle cx="202" cy="20" r="1"/><circle cx="196" cy="23.500" r="1"/><circle cx="190.500" cy="21.500" r="1"/></g>
</svg>
<svg class="a" style="left:1072px;top:482px;" width="210" height="22" viewBox="0 0 210 22">
 <g fill="none" stroke="#f4f4f4" stroke-width="2.200"><circle cx="11" cy="9" r="5.800"/><path d="M7.800 9 H14.200" stroke-width="2"/><path d="M15.500 13.500 L20 18.500" stroke-width="2.800" stroke-linecap="round"/></g>
 <rect x="33.500" y="8.300" width="72" height="4.600" rx="2.300" fill="#4e4e4e"/>
 <g fill="none" stroke="#b4b4b4" stroke-width="2"><circle cx="125.400" cy="9" r="5.800"/><path d="M122.200 9 H128.600 M125.400 5.800 V12.200" stroke-width="1.800"/><path d="M130 13.500 L134.500 18.500" stroke-width="2.800" stroke-linecap="round"/></g>
 <rect x="154" y="5" width="13.500" height="11.500" rx="2.800" fill="none" stroke="#b4b4b4" stroke-width="1.900"/>
 <path d="M156.500 10.800 H165 M158.800 8.500 L156.500 10.800 L158.800 13.100 M162.700 8.500 L165 10.800 L162.700 13.100" fill="none" stroke="#b4b4b4" stroke-width="1.300"/>
 <circle cx="194.800" cy="10.500" r="7.800" fill="#6e6e6e"/><path d="M194.800 10.500 V2.700 A7.800 7.800 0 0 1 201.600 14.400Z" fill="#9c9c9c"/><path d="M194.800 4.500 V10.500 L199.500 13.200" fill="none" stroke="#3a3a3a" stroke-width="1.300"/>
</svg>
<div class="a" style="left:1145px;top:486px;width:14px;height:14px;border-radius:7px;background:radial-gradient(circle at 40% 30%,#e4e4e4,#a0a0a0 60%,#6c6c6c);"></div>
<div class="a" style="left:1282px;top:482px;width:105px;height:21px;border-radius:5px;background:#292929;border:1px solid #202020;box-shadow:0 1px 0 #484848;"></div>
<div class="a tc" id="tc2" style="left:1293px;top:482px;font-size:16.500px;line-height:20px;transform:scaleX(.85);">0<span class="col" style="width:10.200px;font-weight:bold">:</span>00<span class="col" style="width:10.200px;font-weight:bold">:</span>00<span class="col" style="width:8px;font-size:13px">:</span><span style="font-size:13px">00</span></div>

<!-- track headers -->
<div class="a" style="left:82px;top:533px;font-size:12px;line-height:11px;font-weight:bold;color:#e8e8e8;letter-spacing:.5px;white-space:nowrap;-webkit-text-stroke:.4px #e8e8e8;">+<span style="font-weight:normal;-webkit-text-stroke:0">/</span>&#8722;</div>
<svg class="a" style="left:107px;top:536px;" width="10" height="7" viewBox="0 0 10 7"><path d="M1.500 1.500 H8.500 L5 5.500Z" fill="#d8d8d8"/></svg>
<svg class="a" style="left:89px;top:560px;" width="22" height="22" viewBox="0 0 22 22"><circle cx="11" cy="11" r="10.200" fill="#9a9a9a"/><g fill="#373737" transform="rotate(45 11 11)"><circle cx="11" cy="5.200" r="2.500"/><circle cx="5.200" cy="11" r="2.500"/><circle cx="16.800" cy="11" r="2.500"/><circle cx="11" cy="16.800" r="2.500"/><circle cx="11" cy="11" r="1.300"/></g></svg><svg class="a" style="left:89px;top:613px;" width="22" height="22" viewBox="0 0 22 22"><circle cx="11" cy="11" r="10.200" fill="#9a9a9a"/><g fill="#373737" transform="rotate(45 11 11)"><circle cx="11" cy="5.200" r="2.500"/><circle cx="5.200" cy="11" r="2.500"/><circle cx="16.800" cy="11" r="2.500"/><circle cx="11" cy="16.800" r="2.500"/><circle cx="11" cy="11" r="1.300"/></g></svg>
<div class="a" style="left:85px;top:630px;font-size:8px;line-height:8px;color:#c8c8c8;">1</div>
<div class="a" style="left:95px;top:655.500px;width:13px;height:18px;line-height:18px;text-align:center;font-family:'Liberation Serif',serif;font-weight:bold;font-size:16px;color:#a8a8a8;-webkit-text-stroke:.8px #a8a8a8;">T</div>
<div class="a" style="left:90px;top:663.500px;font-size:8px;line-height:8px;color:#c8c8c8;">1</div>
<svg class="a" style="left:92px;top:683px;" width="18" height="18" viewBox="0 0 18 18"><circle cx="6.800" cy="6.800" r="4.600" fill="#a2a2a2"/><path d="M8.500 10.500 L11 8 L14.500 12.500 L13 14Z" fill="#9a9a9a"/><path d="M13 12.500 L15 15" stroke="#b8b8b8" stroke-width="1.600"/></svg>
<svg class="a" style="left:92px;top:711px;" width="18" height="16" viewBox="0 0 18 16"><g fill="#a2a2a2"><path d="M5.500 3 H14 V12 H12.200 V5 H7.300 V8.500 H5.500Z"/><ellipse cx="5.200" cy="9" rx="2.600" ry="2"/><ellipse cx="11.800" cy="12.300" rx="2.600" ry="2"/></g></svg>
<div class="a" style="left:90px;top:719.500px;font-size:8px;line-height:8px;color:#c8c8c8;">1</div>
<!-- left column -->
<svg class="a" style="left:50px;top:557px;" width="26" height="16" viewBox="0 0 26 16"><path d="M3 7 V4.500 Q3 2 5.500 2 Q8 2 8 4.500" fill="none" stroke="#c4c4c4" stroke-width="1.600"/><rect x="5" y="6.500" width="8.500" height="6.500" fill="#b0b0b0"/><path d="M18 3 H15.500 V12.500 H18 M15.500 7.700 H17.500" fill="none" stroke="#c4c4c4" stroke-width="1.300"/><g fill="#a8a8a8"><rect x="18.800" y="2" width="5.500" height="2.600"/><rect x="18.800" y="6.300" width="5.500" height="2.600"/><rect x="18.800" y="10.600" width="5.500" height="2.600"/></g></svg>
<svg class="a" style="left:55px;top:585px;" width="13" height="9" viewBox="0 0 13 9"><path d="M1 1.500 H12 L6.500 7.500Z" fill="#d0d0d0"/></svg>
<!-- bottom bar -->
<div class="a" style="left:62px;top:742px;width:26px;height:12px;border-radius:6px;background:#1c1c1c;border:1px solid #464646;"></div>
<svg class="a" style="left:62px;top:742px;" width="26" height="12" viewBox="0 0 26 12"><path d="M4 6.500 H8.500 M6.500 4.300 L8.800 6.500 L6.500 8.700" fill="none" stroke="#f0f0f0" stroke-width="1.200"/><path d="M10 8.500 H18 M12 8.500 V7 M14.500 8.500 V7 M17 8.500 V7" fill="none" stroke="#f0f0f0" stroke-width="1"/><path d="M16.500 3 H23 L19.800 7Z" fill="#f0f0f0"/></svg>
<svg class="a" style="left:97px;top:741px;" width="32" height="12" viewBox="0 0 32 12"><path d="M9 1.500 V9.500 L2 5.500Z" fill="#646464"/><path d="M22 1.500 V9.500 L29 5.500Z" fill="#8c8c8c"/></svg>
<!-- right column arrows -->
<svg class="a" style="left:1378px;top:545px;" width="16" height="12" viewBox="0 0 16 12"><path d="M3 8.500 L8 4 L13 8.500" fill="none" stroke="#404040" stroke-width="1.400"/></svg>
<svg class="a" style="left:1378px;top:722px;" width="16" height="12" viewBox="0 0 16 12"><path d="M3 3.500 L8 8 L13 3.500" fill="none" stroke="#404040" stroke-width="1.400"/></svg>
<!-- cursor -->
<svg class="a" style="left:1314px;top:684px;" width="16" height="24" viewBox="0 0 16 24"><path d="M1.500 1.500 V17.500 L5.300 14 L8 20.500 L10.800 19.300 L8 13 H13Z" fill="#fff" stroke="#111" stroke-width="1"/></svg>

<!-- ruler-left icons -->
<svg class="a" style="left:54px;top:515px;" width="56" height="16" viewBox="0 0 56 16">
 <rect x="1.200" y="1.500" width="23" height="13.500" rx="2" fill="#8a8a8a"/>
 <g fill="#2a2a2a"><rect x="4" y="3.500" width="9.500" height="2.300"/><rect x="4" y="7.200" width="9.500" height="2.300"/><rect x="4" y="10.900" width="9.500" height="2.300"/><path d="M2.500 3 H3.600 V13.500 H2.500Z"/></g>
 <path d="M17.500 2.800 V6.500 M15.500 4.800 L17.500 6.800 L19.500 4.800 M17.500 13.500 V9.800 M15.500 11.500 L17.500 9.500 L19.500 11.500" fill="none" stroke="#2a2a2a" stroke-width="1.300"/>
 <rect x="31.200" y="1.500" width="23" height="13.500" rx="2" fill="#8a8a8a"/>
 <g fill="#2a2a2a"><rect x="33.500" y="3.500" width="9.500" height="2.300"/><rect x="33.500" y="7.200" width="9.500" height="2.300"/><rect x="33.500" y="10.900" width="9.500" height="2.300"/></g>
 <path d="M45.500 5.500 H51 M48.200 3 V8 M45.500 11.800 H51" fill="none" stroke="#2a2a2a" stroke-width="1.300"/>
</svg>
</body>
</html>
